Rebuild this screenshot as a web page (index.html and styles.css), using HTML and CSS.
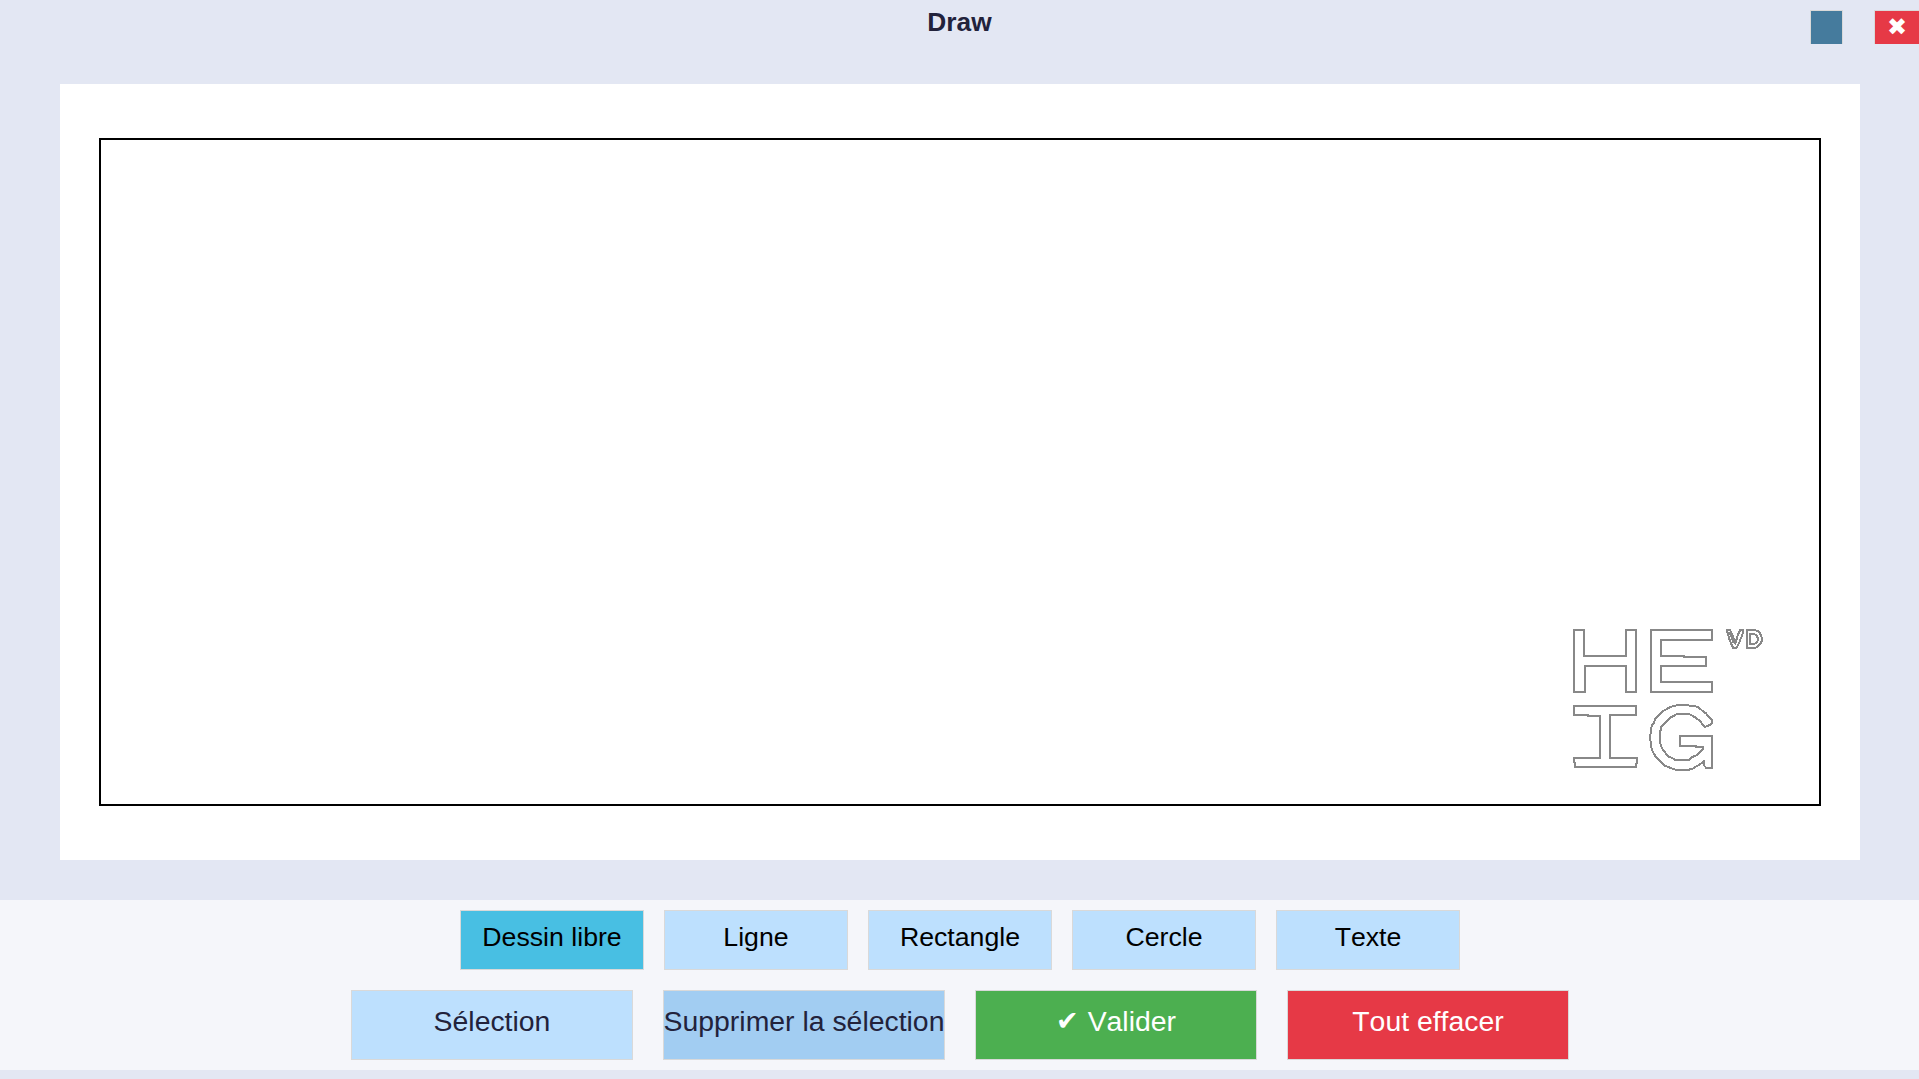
FILE: index.html
```html
<!DOCTYPE html>
<html lang="fr">
<head>
<meta charset="utf-8">
<title>Draw</title>
<link rel="stylesheet" href="styles.css">
</head>
<body>
<header class="titlebar">
  <h1 class="title">Draw</h1>
  <div class="window-actions">
    <button class="window-button minimize" aria-label="Réduire"></button>
    <button class="window-button close" aria-label="Fermer">✖</button>
  </div>
</header>
<main class="sheet">
  <div class="drawing-area">
    <svg class="logo" viewBox="0 0 660 480" aria-label="HEIG-VD">
      <path d="M42 30H72V108H198V30H228V216H198V138H75V216H42Z"/>
      <path d="M273 30H456V60H303V108H373V111H438V138H303V186H456V216H273Z"/>
      <path d="M42 258H228V285H150V414H231V429L228 432V441H45V430L42 427V414H120V288H83V285H42Z"/>
      <path d="M361 254H380L392 258H403L415 262L428 273L438 280L447 291L456 299V310L447 316L435 321L428 314L420 303L408 294L397 287L388 282H351L342 287L330 293L318 305L304 319L301 334L299 353L301 370L305 383L314 396L324 409L336 414L345 419H387L397 411L409 406L420 396L430 385V381H409V378H360V348H456V443H438L432 436V424L428 427L417 435L405 441L397 447L380 450H348L330 443L315 437L303 427L288 411L279 397L274 383L273 368L269 352L273 336L275 318L283 306L286 295L296 286L310 273L325 264L340 258Z"/>
      <path d="M501 30H510L516 42L522 58L526 64L530 58L534 43L540 31H549V38L545 49L540 62L534 76L528 84H520L514 72L508 57L504 44ZM507 37L514 49L519 65L526 70L531 61"/>
      <path d="M561 30H585L597 35L604 47L606 61L600 73L591 82L579 84H561ZM570 42L582 41L591 48L595 59L589 69L579 73H570Z"/>
    </svg>
  </div>
</main>
<footer class="toolbar">
  <div class="tools">
    <button class="tool active">Dessin libre</button>
    <button class="tool">Ligne</button>
    <button class="tool">Rectangle</button>
    <button class="tool">Cercle</button>
    <button class="tool">Texte</button>
  </div>
  <div class="actions">
    <button class="action">Sélection</button>
    <button class="action delete">Supprimer la sélection</button>
    <button class="action confirm"><span class="check">✔</span> Valider</button>
    <button class="action clear">Tout effacer</button>
  </div>
</footer>
</body>
</html>
```
FILE: styles.css
```css
* { box-sizing: border-box; }

body {
  margin: 0;
  height: 1079px;
  display: flex;
  flex-direction: column;
  overflow: hidden;
  background: #e3e7f3;
  color: #22223b;
  font-family: "Liberation Sans", Arial, sans-serif;
  font-kerning: none;
}

button {
  margin: 0;
  padding: 0;
  border: 1px solid #d9d9d9;
  border-radius: 0;
  color: inherit;
  font-family: inherit;
  font-kerning: none;
  white-space: nowrap;
}

.titlebar {
  display: grid;
  grid-template-columns: 1fr auto 1fr;
  height: 84px;
}

.title {
  grid-column: 2;
  margin: 0;
  font-size: 26.3px;
  line-height: 45px;
}

.window-actions {
  display: flex;
  justify-content: flex-end;
  gap: 31px;
  padding-top: 10px;
}

.window-button {
  height: 34px;
  border-bottom: 0;
}

.minimize { width: 33px; background: #457b9d; }

.close {
  width: 45px;
  padding-bottom: 2px;
  border-right: 0;
  background: #e63946;
  color: #fff;
  font: 24px/30px "DejaVu Sans", sans-serif;
}

.sheet {
  height: 776px;
  margin: 0 59px 40px 60px;
  padding: 54px 39px;
  background: #fff;
}

.drawing-area {
  display: flex;
  justify-content: flex-end;
  align-items: flex-end;
  height: 668px;
  padding: 0 39px 24px 0;
  border: 2px solid #000;
}

.logo {
  width: 220px;
  height: 160px;
  fill: none;
  stroke: #888;
  stroke-width: 6;
  shape-rendering: crispEdges;
}

.toolbar {
  height: 170px;
  padding: 10px 0;
  display: flex;
  flex-direction: column;
  gap: 20px;
  background: #f5f6fa;
}

.tools, .actions {
  display: flex;
  justify-content: center;
  padding-left: 1px;
}

.tools { gap: 20px; }
.actions { gap: 30px; }

.tool, .action {
  display: flex;
  justify-content: center;
  background: #bde0fe;
}

.tool {
  width: 184px;
  height: 60px;
  color: #000;
  font-size: 26.7px;
  line-height: 52px;
}

.active { background: #48bfe3; }

.action {
  width: 282px;
  height: 70px;
  font-size: 28.4px;
  line-height: 60px;
}

.delete { background: #a2cdf2; }
.confirm { background: #4caf50; color: #fff; }
.clear { background: #e63946; color: #fff; }

.check {
  margin-right: 9px;
  font-family: "DejaVu Sans", sans-serif;
  font-size: 27px;
}
```
